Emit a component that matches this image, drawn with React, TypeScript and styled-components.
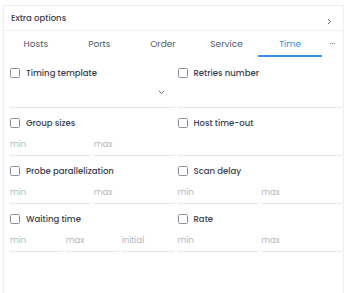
import React from "react";
import styled, { createGlobalStyle } from "styled-components";

const Global = createGlobalStyle`
  html, body { margin: 0; padding: 0; background: #ffffff; }
  body { font-family: "Poppins", "Inter", "Noto Sans", sans-serif; color: #434957; }
  * { box-sizing: border-box; }
`;

const Panel = styled.div`
  margin: 5px 6px 0 3px;
  height: 288px;
  border: 1px solid #eceff4;
  border-bottom: none;
  display: flex;
  flex-direction: column;
`;

const Header = styled.div`
  height: 25px;
  display: flex;
  align-items: center;
  justify-content: space-between;
  padding: 0 11px 0 7px;
  border-bottom: 1px solid #eff1f5;
  font-size: 8.5px;
  font-weight: 500;
  color: #3a404e;
`;

const Chevron = styled.svg`
  width: 5px;
  height: 7px;
  margin-top: 6px;
`;

const Tabs = styled.div`
  display: grid;
  grid-template-columns: repeat(5, 63.6px) 1fr;
  height: 26px;
`;

const Tab = styled.div<{ $active?: boolean }>`
  display: flex;
  align-items: center;
  justify-content: center;
  font-size: 9px;
  color: ${(p) => (p.$active ? "#3b8fe0" : "#545a69")};
  border-bottom: 2px solid ${(p) => (p.$active ? "#3b8fe0" : "transparent")};
  padding-top: 2px;
`;

const Content = styled.div`
  display: grid;
  grid-template-columns: 1fr 1fr;
  column-gap: 3px;
  row-gap: 8px;
  padding: 9px 1px 0 6px;
`;

const Field = styled.div`
  display: flex;
  flex-direction: column;
`;

const Label = styled.label`
  display: flex;
  align-items: center;
  gap: 6px;
  height: 14px;
  font-size: 8.5px;
  font-weight: 500;
  color: #3a404e;
`;

const Box = styled.span`
  width: 10px;
  height: 10px;
  border: 1px solid #8a909c;
  border-radius: 1.5px;
  flex: none;
`;

const Inputs = styled.div<{ $cols: number }>`
  display: grid;
  grid-template-columns: repeat(${(p) => p.$cols}, 1fr);
  column-gap: 3px;
  margin-top: 4px;
`;

const Input = styled.div<{ $tall?: boolean }>`
  height: ${(p) => (p.$tall ? "24px" : "22px")};
  border-bottom: 1px solid #e3e8f1;
  display: flex;
  align-items: center;
  justify-content: space-between;
  font-size: 8.5px;
  color: #b3b7c0;
  padding: 0 2px 0 0;
`;

const Caret = styled.svg`
  width: 7px;
  height: 5px;
  margin-right: 8px;
  margin-bottom: 6px;
`;

type F = { label: string; inputs?: string[]; select?: boolean };

const fields: F[] = [
  { label: "Timing template", select: true },
  { label: "Retries number", inputs: [""] },
  { label: "Group sizes", inputs: ["min", "max"] },
  { label: "Host time-out", inputs: [""] },
  { label: "Probe parallelization", inputs: ["min", "max"] },
  { label: "Scan delay", inputs: ["min", "max"] },
  { label: "Waiting time", inputs: ["min", "max", "initial"] },
  { label: "Rate", inputs: ["min", "max"] },
];

export default function App() {
  return (
    <>
      <Global />
      <Panel>
        <Header>
          <span>Extra options</span>
          <Chevron viewBox="0 0 5 7">
            <path d="M1 1l2.5 2.5L1 6" fill="none" stroke="#5d6370" strokeWidth="1" />
          </Chevron>
        </Header>
        <Tabs>
          <Tab>Hosts</Tab>
          <Tab>Ports</Tab>
          <Tab>Order</Tab>
          <Tab>Service</Tab>
          <Tab $active>Time</Tab>
          <Tab>···</Tab>
        </Tabs>
        <Content>
          {fields.map((f, i) => {
            const tall = i < 2;
            const items = f.select ? [""] : f.inputs || [""];
            return (
              <Field key={f.label}>
                <Label>
                  <Box />
                  {f.label}
                </Label>
                <Inputs $cols={items.length}>
                  {items.map((t, j) => (
                    <Input key={j} $tall={tall}>
                      <span>{t}</span>
                      {f.select && (
                        <Caret viewBox="0 0 7 5">
                          <path d="M1 1l2.5 2.5L6 1" fill="none" stroke="#6b7180" strokeWidth="1" />
                        </Caret>
                      )}
                    </Input>
                  ))}
                </Inputs>
              </Field>
            );
          })}
        </Content>
      </Panel>
    </>
  );
}
